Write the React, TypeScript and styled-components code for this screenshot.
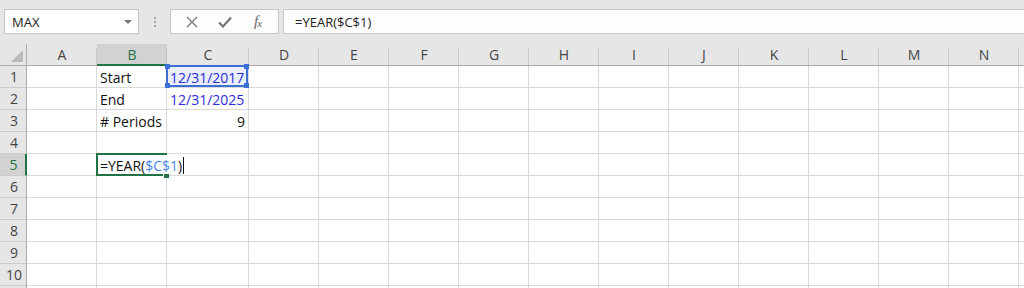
import React from 'react';
import styled, { createGlobalStyle } from 'styled-components';

const GlobalStyle = createGlobalStyle`
  html, body {
    margin: 0;
    padding: 0;
    background: #ffffff;
  }
  body {
    width: 1024px;
    height: 288px;
    overflow: hidden;
    font-family: "Open Sans", "Liberation Sans", sans-serif;
  }
`;

const COLS = ['A', 'B', 'C', 'D', 'E', 'F', 'G', 'H', 'I', 'J', 'K', 'L', 'M', 'N', ''];
const ROWS = [1, 2, 3, 4, 5, 6, 7, 8, 9, 10, 11];

const Page = styled.div`
  width: 1024px;
  height: 288px;
  overflow: hidden;
  display: flex;
  flex-direction: column;
  background: #e6e6e6;
`;

// formula bar
const Toolbar = styled.div`
  height: 44px;
  flex: none;
  display: flex;
  align-items: flex-start;
  padding: 9px 0 0 4px;
  box-sizing: border-box;
`;

const NameBox = styled.div`
  width: 135px;
  height: 25px;
  box-sizing: border-box;
  background: #ffffff;
  border: 1px solid #c6c6c6;
  display: flex;
  align-items: center;
  justify-content: space-between;
  padding: 0 6px 0 7px;
  font-size: 13px;
  color: #222;
`;

const Caret = styled.span`
  width: 0;
  height: 0;
  border-left: 4px solid transparent;
  border-right: 4px solid transparent;
  border-top: 4px solid #777;
`;

const Grip = styled.div`
  width: 31px;
  height: 25px;
  display: flex;
  flex-direction: column;
  align-items: center;
  justify-content: center;
  gap: 2px;

  span {
    width: 2px;
    height: 2px;
    background: #a6a6a6;
  }
`;

const ButtonBox = styled.div`
  width: 109px;
  height: 25px;
  box-sizing: border-box;
  background: #fdfdfd;
  border: 1px solid #c6c6c6;
  display: flex;
  align-items: center;
  justify-content: space-around;
  padding: 0 4px;
`;

const IconButton = styled.span`
  width: 24px;
  display: flex;
  justify-content: center;
  align-items: center;
  color: #777;
`;

const Fx = styled.span`
  font-family: "Liberation Serif", serif;
  font-style: italic;
  font-size: 15px;
  color: #666;
  letter-spacing: -1px;

  sub {
    font-size: 11px;
    vertical-align: -1px;
  }
`;

const FormulaInput = styled.div`
  flex: 1;
  margin-left: 4px;
  height: 25px;
  box-sizing: border-box;
  background: #fdfdfd;
  border: 1px solid #c6c6c6;
  border-right: none;
  display: flex;
  align-items: center;
  padding-left: 11px;
  font-size: 13px;
  color: #222;
`;

// grid
const Sheet = styled.div`
  display: grid;
  grid-template-columns: 27px 70px 70px 82px repeat(12, 70px);
  grid-auto-rows: 22px;
  background: #ffffff;
`;

const Corner = styled.div`
  background: #e6e6e6;
  border-right: 1px solid #ababab;
  border-bottom: 1px solid #ababab;
  box-sizing: border-box;
  position: relative;

  &::after {
    content: '';
    position: absolute;
    right: 3px;
    bottom: 3px;
    width: 0;
    height: 0;
    border-left: 12px solid transparent;
    border-bottom: 12px solid #b9b9b9;
  }
`;

const ColHead = styled.div<{ $active?: boolean }>`
  background: ${p => (p.$active ? '#d2d2d2' : '#e6e6e6')};
  color: ${p => (p.$active ? '#217346' : '#444')};
  border-bottom: ${p => (p.$active ? '2px solid #217346' : '1px solid #ababab')};
  box-sizing: border-box;
  font-size: 14px;
  display: flex;
  align-items: center;
  justify-content: center;
  position: relative;

  &::after {
    content: '';
    position: absolute;
    right: 0;
    top: 4px;
    bottom: 0;
    width: 1px;
    background: ${p => (p.$active ? '#bfbfbf' : '#cbcbcb')};
  }
`;

const RowHead = styled.div<{ $active?: boolean }>`
  background: ${p => (p.$active ? '#d2d2d2' : '#e6e6e6')};
  color: ${p => (p.$active ? '#217346' : '#444')};
  border-right: ${p => (p.$active ? '2px solid #217346' : '1px solid #ababab')};
  border-bottom: 1px solid #cbcbcb;
  box-sizing: border-box;
  font-size: 14px;
  display: flex;
  align-items: center;
  justify-content: center;
  padding-left: 2px;
`;

const Cell = styled.div<{ $align?: 'left' | 'right'; $color?: string; $tint?: boolean }>`
  border-right: 1px solid #d9d9d9;
  border-bottom: 1px solid #d9d9d9;
  box-sizing: border-box;
  font-size: 14px;
  color: ${p => p.$color || '#111'};
  background: ${p => (p.$tint ? '#e9eefa' : 'transparent')};
  display: flex;
  align-items: center;
  justify-content: ${p => (p.$align === 'right' ? 'flex-end' : 'flex-start')};
  padding: 1px 3px 0 3px;
  white-space: nowrap;
  position: relative;
`;

// blue range marker drawn over C1
const RangeMark = styled.span`
  position: absolute;
  left: -1px;
  top: -1px;
  right: 0;
  bottom: 0;
  border: 2px solid #3b6fd6;
  pointer-events: none;

  i {
    position: absolute;
    width: 5px;
    height: 5px;
    background: #3b6fd6;
  }
  i:nth-child(1) { left: -3px; top: -3px; }
  i:nth-child(2) { right: -3px; top: -3px; }
  i:nth-child(3) { left: -3px; bottom: -3px; }
  i:nth-child(4) { right: -3px; bottom: -3px; }
`;

// green active cell border drawn over B5
const ActiveMark = styled.span`
  position: absolute;
  left: -1px;
  top: -1px;
  right: -1px;
  bottom: -1px;
  border: 2px solid #217346;
  pointer-events: none;
  z-index: 1;

  &::after {
    content: '';
    position: absolute;
    right: -4px;
    bottom: -4px;
    width: 5px;
    height: 5px;
    background: #217346;
    border-left: 1px solid #fff;
    border-top: 1px solid #fff;
  }
`;

const Ref = styled.span`
  color: #4a86e8;
`;

const TextCaret = styled.span`
  display: inline-block;
  width: 1px;
  height: 17px;
  background: #111;
  margin-left: 1px;
`;

// in-cell editor that spills over the cell's right edge
const Editor = styled.span`
  position: absolute;
  left: 1px;
  top: 1px;
  bottom: 1px;
  z-index: 2;
  background: #ffffff;
  display: flex;
  align-items: center;
  padding: 1px 3px 0 2px;
  white-space: nowrap;
`;

const cellData: Record<string, { text: React.ReactNode; align?: 'left' | 'right'; color?: string }> = {
  B1: { text: 'Start' },
  C1: { text: '12/31/2017', color: '#2b2bdf' },
  B2: { text: 'End' },
  C2: { text: '12/31/2025', color: '#2b2bdf' },
  B3: { text: '# Periods' },
  C3: { text: '9', align: 'right' },
};

export default function App() {
  return (
    <>
      <GlobalStyle />
      <Page>
        <Toolbar>
          <NameBox>
            MAX
            <Caret />
          </NameBox>
          <Grip>
            <span />
            <span />
            <span />
          </Grip>
          <ButtonBox>
            <IconButton>
              <svg width="12" height="12" viewBox="0 0 12 12">
                <path d="M1 1 L11 11 M11 1 L1 11" stroke="#777" strokeWidth="1.3" fill="none" />
              </svg>
            </IconButton>
            <IconButton>
              <svg width="14" height="12" viewBox="0 0 14 12">
                <path d="M1 6.5 L5 10.5 L13 1.5" stroke="#777" strokeWidth="2.2" fill="none" />
              </svg>
            </IconButton>
            <IconButton>
              <Fx>
                f<sub>x</sub>
              </Fx>
            </IconButton>
          </ButtonBox>
          <FormulaInput>=YEAR($C$1)</FormulaInput>
        </Toolbar>

        <Sheet>
          <Corner />
          {COLS.map((c, i) => (
            <ColHead key={'c' + i} $active={c === 'B'}>
              {c}
            </ColHead>
          ))}

          {ROWS.map(r => (
            <React.Fragment key={r}>
              <RowHead $active={r === 5}>{r <= 10 ? r : ''}</RowHead>
              {COLS.map((c, i) => {
                const id = c + r;
                const d = c ? cellData[id] : undefined;
                if (id === 'B5') {
                  return (
                    <Cell key={i}>
                      <ActiveMark />
                      <Editor>
                        =YEAR(<Ref>$C$1</Ref>)<TextCaret />
                      </Editor>
                    </Cell>
                  );
                }
                return (
                  <Cell key={i} $align={d?.align} $color={d?.color} $tint={id === 'C1'}>
                    {d?.text}
                    {id === 'C1' && (
                      <RangeMark>
                        <i />
                        <i />
                        <i />
                        <i />
                      </RangeMark>
                    )}
                  </Cell>
                );
              })}
            </React.Fragment>
          ))}
        </Sheet>
      </Page>
    </>
  );
}
